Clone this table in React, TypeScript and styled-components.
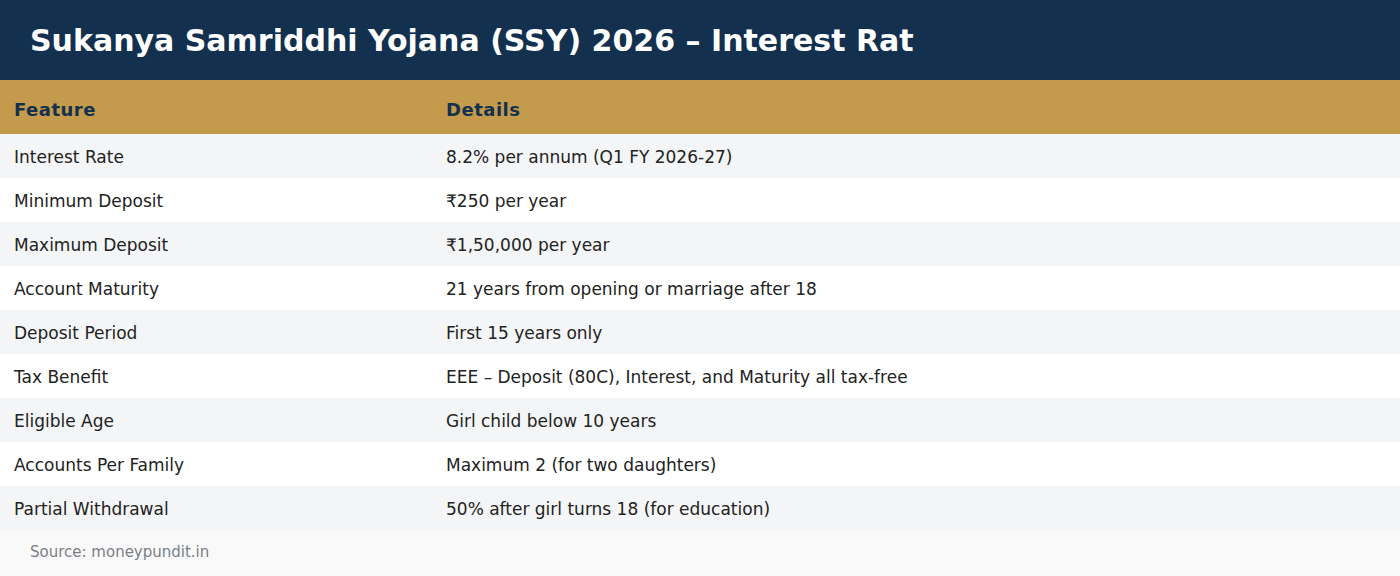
import React from "react";
import styled, { createGlobalStyle } from "styled-components";

const Global = createGlobalStyle`
  html, body { margin: 0; padding: 0; background: #ffffff; }
  body { font-family: "DejaVu Sans", Verdana, sans-serif; }
`;

const Page = styled.div`
  width: 1400px;
  height: 576px;
  overflow: hidden;
  display: flex;
  flex-direction: column;
`;

const TitleBar = styled.header`
  height: 80px;
  background: #13304f;
  display: flex;
  align-items: center;
  padding: 0 30px;
  box-sizing: border-box;
`;

const Title = styled.h1`
  margin: 0;
  color: #ffffff;
  font-size: 30px;
  font-weight: bold;
  white-space: nowrap;
`;

const Grid = styled.div`
  display: grid;
  grid-template-columns: 432px 1fr;
`;

const HeadRow = styled(Grid)`
  height: 54px;
  background: #c49a4c;
  align-items: center;
  box-sizing: border-box;
  padding-top: 4px;
`;

const HeadCell = styled.div`
  padding: 0 14px;
  color: #13304f;
  font-size: 18px;
  font-weight: bold;
  letter-spacing: 0.5px;
`;

const Row = styled(Grid)<{ $alt: boolean }>`
  height: 44px;
  align-items: center;
  box-sizing: border-box;
  padding-top: 2px;
  background: ${(p) => (p.$alt ? "#f4f5f7" : "#ffffff")};
`;

const Cell = styled.div`
  padding: 0 14px;
  color: #222222;
  font-size: 17px;
`;

const Footer = styled.footer`
  flex: 1;
  background: #f9f9f9;
  display: flex;
  align-items: center;
  padding: 0 30px 3px;
  color: #7a7f87;
  font-size: 15px;
`;

const rows: [string, string][] = [
  ["Interest Rate", "8.2% per annum (Q1 FY 2026-27)"],
  ["Minimum Deposit", "₹250 per year"],
  ["Maximum Deposit", "₹1,50,000 per year"],
  ["Account Maturity", "21 years from opening or marriage after 18"],
  ["Deposit Period", "First 15 years only"],
  ["Tax Benefit", "EEE – Deposit (80C), Interest, and Maturity all tax-free"],
  ["Eligible Age", "Girl child below 10 years"],
  ["Accounts Per Family", "Maximum 2 (for two daughters)"],
  ["Partial Withdrawal", "50% after girl turns 18 (for education)"],
];

export default function App() {
  return (
    <>
      <Global />
      <Page>
        <TitleBar>
          <Title>Sukanya Samriddhi Yojana (SSY) 2026 – Interest Rat</Title>
        </TitleBar>
        <HeadRow>
          <HeadCell>Feature</HeadCell>
          <HeadCell>Details</HeadCell>
        </HeadRow>
        {rows.map(([f, d], i) => (
          <Row key={f} $alt={i % 2 === 0}>
            <Cell>{f}</Cell>
            <Cell>{d}</Cell>
          </Row>
        ))}
        <Footer>Source: moneypundit.in</Footer>
      </Page>
    </>
  );
}
